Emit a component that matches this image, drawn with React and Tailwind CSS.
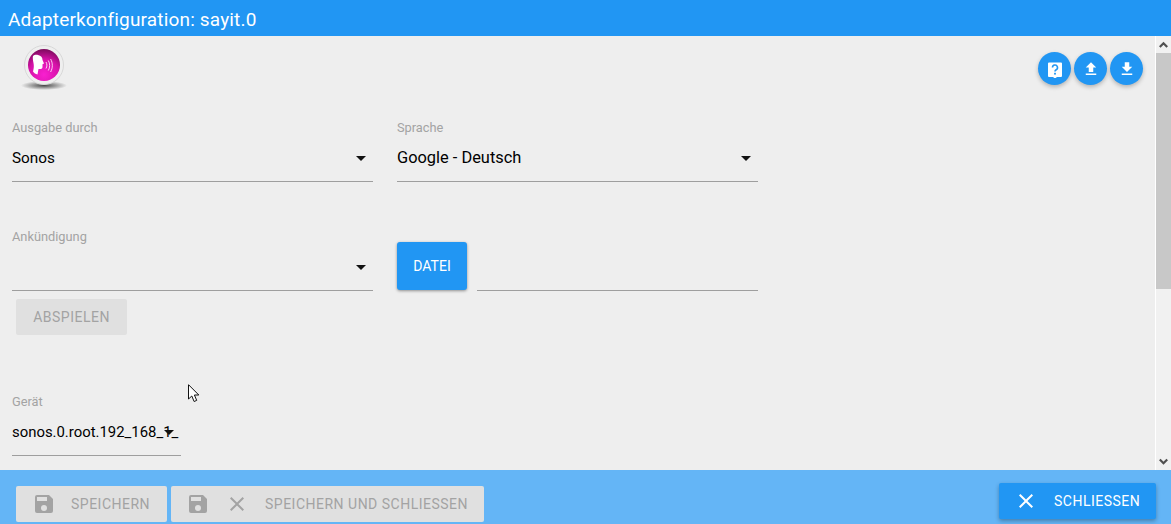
import React from 'react';

const Caret = () => (
  <svg width="10" height="5" viewBox="0 0 10 5" className="block">
    <path d="M0 0h10L5 5z" fill="#111" />
  </svg>
);

const SaveIcon = ({ color = '#a3a3a3' }) => (
  <svg width="24" height="24" viewBox="0 0 24 24" fill={color}>
    <path d="M17 3H5a2 2 0 0 0-2 2v14a2 2 0 0 0 2 2h14a2 2 0 0 0 2-2V7l-4-4zm-5 16a3 3 0 1 1 0-6 3 3 0 0 1 0 6zm3-10H5V5h10v4z" />
  </svg>
);

const CloseIcon = ({ color = '#a3a3a3' }) => (
  <svg width="24" height="24" viewBox="0 0 24 24" fill={color}>
    <path d="M19 6.41 17.59 5 12 10.59 6.41 5 5 6.41 10.59 12 5 17.59 6.41 19 12 13.41 17.59 19 19 17.59 13.41 12z" />
  </svg>
);

// Round icon buttons top right
const RoundButton = ({ children }) => (
  <button className="w-[33px] h-[33px] rounded-full bg-[#2196f3] flex items-center justify-center shadow-[0_2px_4px_rgba(0,0,0,0.25)]">
    {children}
  </button>
);

const SelectField = ({ label, value, width, valueClass = 'text-[16px]' }) => (
  <div className={`${width} shrink-0`}>
    <div className="text-[12.8px] leading-[14px] text-[#a3a3a3]">{label}</div>
    <div className="relative h-[47px] pt-[1px] border-b border-[#9e9e9e] flex items-center">
      <span className={`${valueClass} text-black whitespace-nowrap`}>{value}</span>
      <span className="absolute right-[7px] top-[21px]">
        <Caret />
      </span>
    </div>
  </div>
);

const Logo = () => (
  <svg width="48" height="48" viewBox="0 0 48 48" className="block">
    <defs>
      <radialGradient id="ball" cx="50%" cy="80%" r="80%">
        <stop offset="0%" stopColor="#f820d0" />
        <stop offset="60%" stopColor="#d612a8" />
        <stop offset="100%" stopColor="#7c0b5c" />
      </radialGradient>
      <radialGradient id="shadow" cx="50%" cy="50%" r="50%">
        <stop offset="0%" stopColor="#4a4a4a" />
        <stop offset="100%" stopColor="#4a4a4a" stopOpacity="0" />
      </radialGradient>
    </defs>
    <ellipse cx="24" cy="40.500" rx="23" ry="4.500" fill="url(#shadow)" />
    <circle cx="24" cy="20" r="19.500" fill="#efefef" stroke="#d8d8d8" />
    <circle cx="24" cy="20" r="16" fill="url(#ball)" />
    <path d="M13 11c1-1 3-1.500 5-1 3 .5 4.500 2.500 4.500 5l1.500 3.500-1.500.8v2.700c0 1.500-1 2-2.500 2h-1.500l-1 5.500c-2-.5-3.500-1.500-4.500-3 1-3.500 1-6 .5-8.500S12.500 13 13 11z" fill="#fff" />
    <g fill="none" stroke="#fff" strokeWidth="0.8">
      <path d="M26 17c1.200 2 1.200 4.500 0 6.500" />
      <path d="M28.300 15.500c1.800 3 1.800 7 0 10" />
      <path d="M30.600 14c2.300 4 2.300 9 0 13" />
    </g>
  </svg>
);

export default function App() {
  return (
    <div className="relative w-[1171px] h-[524px] flex flex-col overflow-hidden bg-[#eeeeee] font-['Roboto',sans-serif]">
      {/* Title bar */}
      <div className="h-[36px] shrink-0 bg-[#2196f3] text-white text-[19px] tracking-[0.17px] leading-[40px] pl-2">
        Adapterkonfiguration: sayit.0
      </div>

      <div className="flex-1 flex min-h-0">
        {/* Form */}
        <div className="flex-1 relative pl-3">
          <div className="absolute right-[12px] top-[16px] flex gap-[3px]">
            <RoundButton>
              <svg width="18" height="18" viewBox="0 0 18 18">
                <path d="M3 2.500h12a1 1 0 0 1 1 1V16a1 1 0 0 1-1 1h-4l-2 1.500L7 17H3a1 1 0 0 1-1-1V3.500a1 1 0 0 1 1-1z" fill="#fff" />
                <path d="M6.500 7.500a2.500 2.500 0 1 1 3.700 2.200c-.8.500-1.200.9-1.200 1.800" fill="none" stroke="#2196f3" strokeWidth="1.600" />
                <rect x="8.100" y="12.800" width="1.800" height="1.800" fill="#2196f3" />
              </svg>
            </RoundButton>
            <RoundButton>
              <svg width="18" height="18" viewBox="0 0 24 24" fill="#fff">
                <path d="M9 16h6v-6h4l-7-7-7 7h4zm-4 2h14v2H5z" />
              </svg>
            </RoundButton>
            <RoundButton>
              <svg width="18" height="18" viewBox="0 0 24 24" fill="#fff">
                <path d="M19 9h-4V3H9v6H5l7 7 7-7zM5 18v2h14v-2H5z" />
              </svg>
            </RoundButton>
          </div>

          <div className="ml-[8px] mt-[9px] h-[48px]">
            <Logo />
          </div>

          <div className="flex gap-[24px] mt-[28px]">
            <SelectField label="Ausgabe durch" value="Sonos" width="w-[361px]" valueClass="text-[15.300px]" />
            <SelectField label="Sprache" value="Google - Deutsch" width="w-[361px]" valueClass="text-[16.400px]" />
          </div>

          <div className="flex gap-[24px] mt-[48px] items-end">
            <SelectField label="Ankündigung" value="" width="w-[361px]" />
            <div className="flex items-end gap-[10px] w-[361px]">
              <button className="mb-[1px] w-[70px] h-[48px] rounded-[3px] bg-[#2196f3] text-white text-[14px] shadow-[0_1px_3px_rgba(0,0,0,0.4)]">
                DATEI
              </button>
              <div className="flex-1 border-b border-[#9e9e9e]" />
            </div>
          </div>

          <button className="block ml-[4px] mt-[8px] w-[111px] h-[36px] rounded-[2px] bg-[#e0e0e0] text-[#a3a3a3] text-[14px] tracking-[0.5px]">
            ABSPIELEN
          </button>

          <div className="mt-[60px]">
            <SelectField
              label="Gerät"
              value="sonos.0.root.192_168_1_"
              width="w-[169px]"
              valueClass="text-[14.900px]"
            />
          </div>
        </div>

        {/* Scrollbar */}
        <div className="w-[16px] shrink-0 bg-[#f1f1f1] flex flex-col border-l border-white">
          <div className="h-[17px] flex items-center justify-center">
            <svg width="15" height="15" viewBox="0 0 15 15" fill="none" stroke="#505050" strokeWidth="2.200">
              <path d="M3.800 10 7.500 6.300l3.700 3.700" />
            </svg>
          </div>
          <div className="h-[236px] bg-[#c8c8c8]" />
          <div className="flex-1" />
          <div className="h-[17px] flex items-center justify-center">
            <svg width="15" height="15" viewBox="0 0 15 15" fill="none" stroke="#505050" strokeWidth="2.200">
              <path d="M3.800 5.500 7.500 9.200l3.700-3.700" />
            </svg>
          </div>
        </div>
      </div>

      {/* Footer */}
      <div className="h-[54px] shrink-0 bg-[#64b5f6] flex items-start pl-4 pr-[15px] pt-[16px]">
        <button className="w-[151px] h-[36px] rounded-[2px] bg-[#e0e0e0] flex items-center pl-4 gap-[15px] text-[#a3a3a3] text-[14px] tracking-[0.5px]">
          <SaveIcon />
          SPEICHERN
        </button>
        <button className="ml-[4px] w-[313px] h-[36px] rounded-[2px] bg-[#e0e0e0] flex items-center pl-[15px] text-[#a3a3a3] text-[14px] tracking-[0.5px]">
          <SaveIcon />
          <span className="ml-[15px]"><CloseIcon /></span>
          <span className="ml-[16px]">SPEICHERN UND SCHLIESSEN</span>
        </button>
        <button className="ml-auto -mt-[3px] w-[157px] h-[36px] rounded-[2px] bg-[#2196f3] flex items-center pl-[15px] gap-[16px] text-white text-[14px] tracking-[0.5px] shadow-[0_2px_4px_rgba(0,0,0,0.3)]">
          <CloseIcon color="#fff" />
          SCHLIESSEN
        </button>
      </div>

      {/* Mouse pointer caught in the screenshot */}
      <svg width="14" height="21" viewBox="0 0 14 21" className="absolute left-[188px] top-[384px]">
        <path d="M.5.700V15l3.300-3 2.300 5.500 2.600-1.100L6.400 11h4.400z" fill="#fff" stroke="#111" strokeWidth="1" />
      </svg>
    </div>
  );
}
